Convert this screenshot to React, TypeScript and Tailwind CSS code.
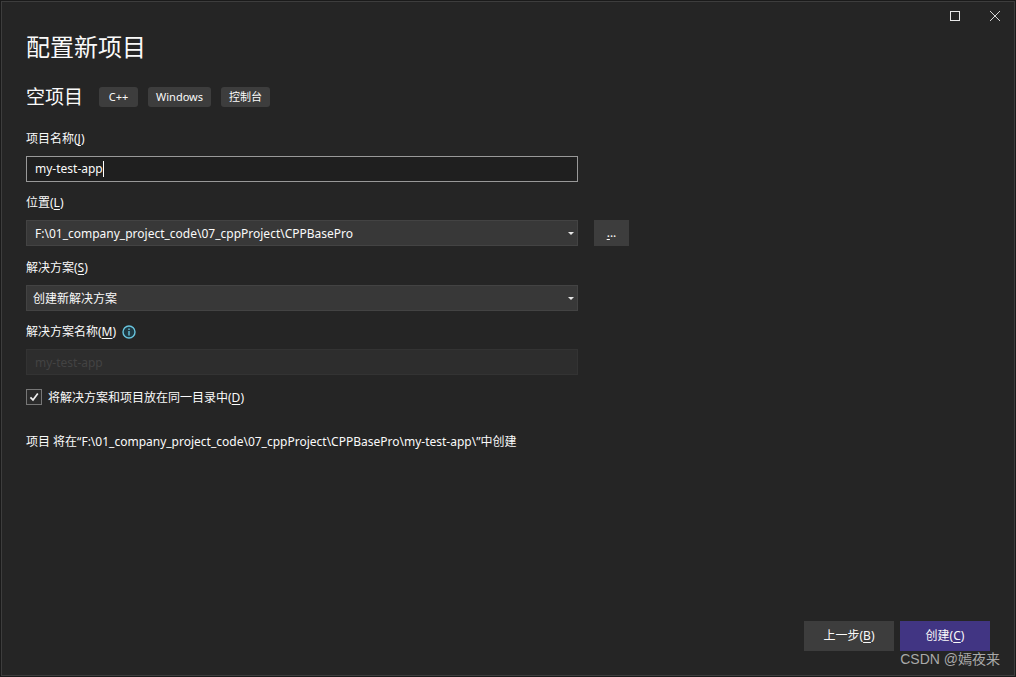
import { useState } from "react";
import type { ReactNode } from "react";

function Key({ children }: { children: string }) {
  return <span className="underline underline-offset-2">{children}</span>;
}

function Tag({ children }: { children: string }) {
  return (
    <li className="flex h-5 min-w-[39px] items-center justify-center rounded-[3px] bg-[#3d3d3d] px-2 text-[11px]">
      {children}
    </li>
  );
}

function Field({ id, label, hint, children }: { id: string; label: ReactNode; hint?: ReactNode; children: ReactNode }) {
  return (
    <div className="flex flex-col gap-2">
      <div className="flex h-[18px] items-center gap-1.5">
        <label htmlFor={id}>{label}</label>
        {hint}
      </div>
      {children}
    </div>
  );
}

function InfoIcon() {
  return (
    <svg className="size-[14px]" viewBox="0 0 14 14" fill="none" aria-hidden="true">
      <circle cx="7" cy="7" r="6" fill="#1f3942" stroke="#68c4dd" strokeWidth="1.4" />
      <path d="M7 6v4.5M7 3.5v1.4" stroke="#68c4dd" strokeWidth="1.4" />
    </svg>
  );
}

function Dropdown({ id, option, inset }: { id: string; option: string; inset: string }) {
  return (
    <div className="relative w-full max-w-[552px]">
      <select
        id={id}
        className={`block h-[26px] w-full appearance-none border border-[#434343] bg-[#383838] pt-0.5 pr-6 outline-none ${inset}`}
      >
        <option>{option}</option>
      </select>
      <svg className="pointer-events-none absolute top-3 right-1 h-[3px] w-1.5" viewBox="0 0 6 3" aria-hidden="true">
        <path d="M0 0h6L3 3z" fill="#e6e6e6" />
      </svg>
    </div>
  );
}

export default function App() {
  const [name, setName] = useState("my-test-app");
  const [sameFolder, setSameFolder] = useState(true);

  return (
    <div className="flex min-h-screen flex-col bg-[#1a1a1a] p-px font-['Noto_Sans','Noto_Sans_CJK_SC',sans-serif] text-xs text-[#fafafa]">
      <div className="relative flex flex-1 flex-col border border-[#3d3d3d] bg-[#252525]">
        <div className="flex h-7 justify-end gap-0.5">
          <button aria-label="最大化" className="flex w-[38px] items-center justify-center">
            <svg className="size-[10px]" viewBox="0 0 10 10" fill="none" shapeRendering="crispEdges">
              <path d="M.5.5h9v9h-9z" stroke="#e8e8e8" />
            </svg>
          </button>
          <button aria-label="关闭" className="flex w-[38px] items-center justify-center">
            <svg className="size-[10px]" viewBox="0 0 10 10" fill="none">
              <path d="M0 0l10 10M10 0L0 10" stroke="#d4d4d4" />
            </svg>
          </button>
        </div>

        <main className="flex flex-1 flex-col px-6 pb-6">
          <h1 className="text-2xl leading-[34px]">配置新项目</h1>
          <div className="mt-[18px] flex h-[30px] items-center gap-4">
            <h2 className="text-[19px] leading-7">空项目</h2>
            <ul className="flex gap-[10px]">
              <Tag>C++</Tag>
              <Tag>Windows</Tag>
              <Tag>控制台</Tag>
            </ul>
          </div>

          <form className="mt-[18px] flex flex-1 flex-col" onSubmit={(e) => e.preventDefault()}>
            <div className="flex flex-col gap-[13px]">
              <div className="flex flex-col gap-3">
                <Field id="project-name" label={<>项目名称(<Key>J</Key>)</>}>
                  <div className="flex h-[26px] w-full max-w-[552px] items-center border border-[#999999] bg-[#1f1f1f] px-2">
                    <input
                      id="project-name"
                      className="field-sizing-content max-w-full bg-transparent caret-transparent outline-none"
                      value={name}
                      onChange={(e) => setName(e.target.value)}
                    />
                    <span className="h-4 w-px bg-white" />
                  </div>
                </Field>
                <Field id="location" label={<>位置(<Key>L</Key>)</>}>
                  <div className="flex gap-4">
                    <Dropdown id="location" option="F:\01_company_project_code\07_cppProject\CPPBasePro" inset="pl-2" />
                    <button type="button" aria-label="浏览" className="h-[26px] w-[35px] shrink-0 bg-[#3d3d3d]">
                      <Key>.</Key>..
                    </button>
                  </div>
                </Field>
              </div>
              <div className="flex flex-col gap-3">
                <Field id="solution" label={<>解决方案(<Key>S</Key>)</>}>
                  <Dropdown id="solution" option="创建新解决方案" inset="pl-1.5" />
                </Field>
                <Field id="solution-name" label={<>解决方案名称(<Key>M</Key>)</>} hint={<InfoIcon />}>
                  <input
                    id="solution-name"
                    disabled
                    value={name}
                    className="h-[26px] w-full max-w-[552px] border border-[#333333] bg-[#2d2d2d] px-2 text-[#434343]"
                  />
                </Field>
              </div>
            </div>

            <label className="mt-3 flex h-5 items-center gap-1.5 self-start">
              <span className="grid size-4">
                <input
                  type="checkbox"
                  checked={sameFolder}
                  onChange={(e) => setSameFolder(e.target.checked)}
                  className="peer col-start-1 row-start-1 size-4 appearance-none border border-[#777777] bg-[#2b2b2b]"
                />
                <svg
                  className="pointer-events-none invisible col-start-1 row-start-1 size-4 peer-checked:visible"
                  viewBox="0 0 16 16"
                  fill="none"
                  aria-hidden="true"
                >
                  <path d="M4.4 8.3l2.6 2.6L11.8 4.4" stroke="#f0f0f0" strokeWidth="1.7" />
                </svg>
              </span>
              <span className="pt-0.5">将解决方案和项目放在同一目录中(<Key>D</Key>)</span>
            </label>

            <p className="mt-6 leading-[22px]">
              项目 将在“F:\01_company_project_code\07_cppProject\CPPBasePro\{name}\”中创建
            </p>

            <div className="mt-auto flex justify-end gap-1.5">
              <button type="button" className="h-[30px] w-[90px] bg-[#3d3d3d]">
                上一步(<Key>B</Key>)
              </button>
              <button type="submit" className="h-[30px] w-[90px] bg-[#413583]">
                创建(<Key>C</Key>)
              </button>
            </div>
          </form>
        </main>
        <span className="pointer-events-none absolute right-[14px] bottom-1.5 font-['Liberation_Sans','Noto_Sans_CJK_SC',sans-serif] text-sm leading-5 text-[#a9a9a9]">
          CSDN @嫣夜来
        </span>
      </div>
    </div>
  );
}
